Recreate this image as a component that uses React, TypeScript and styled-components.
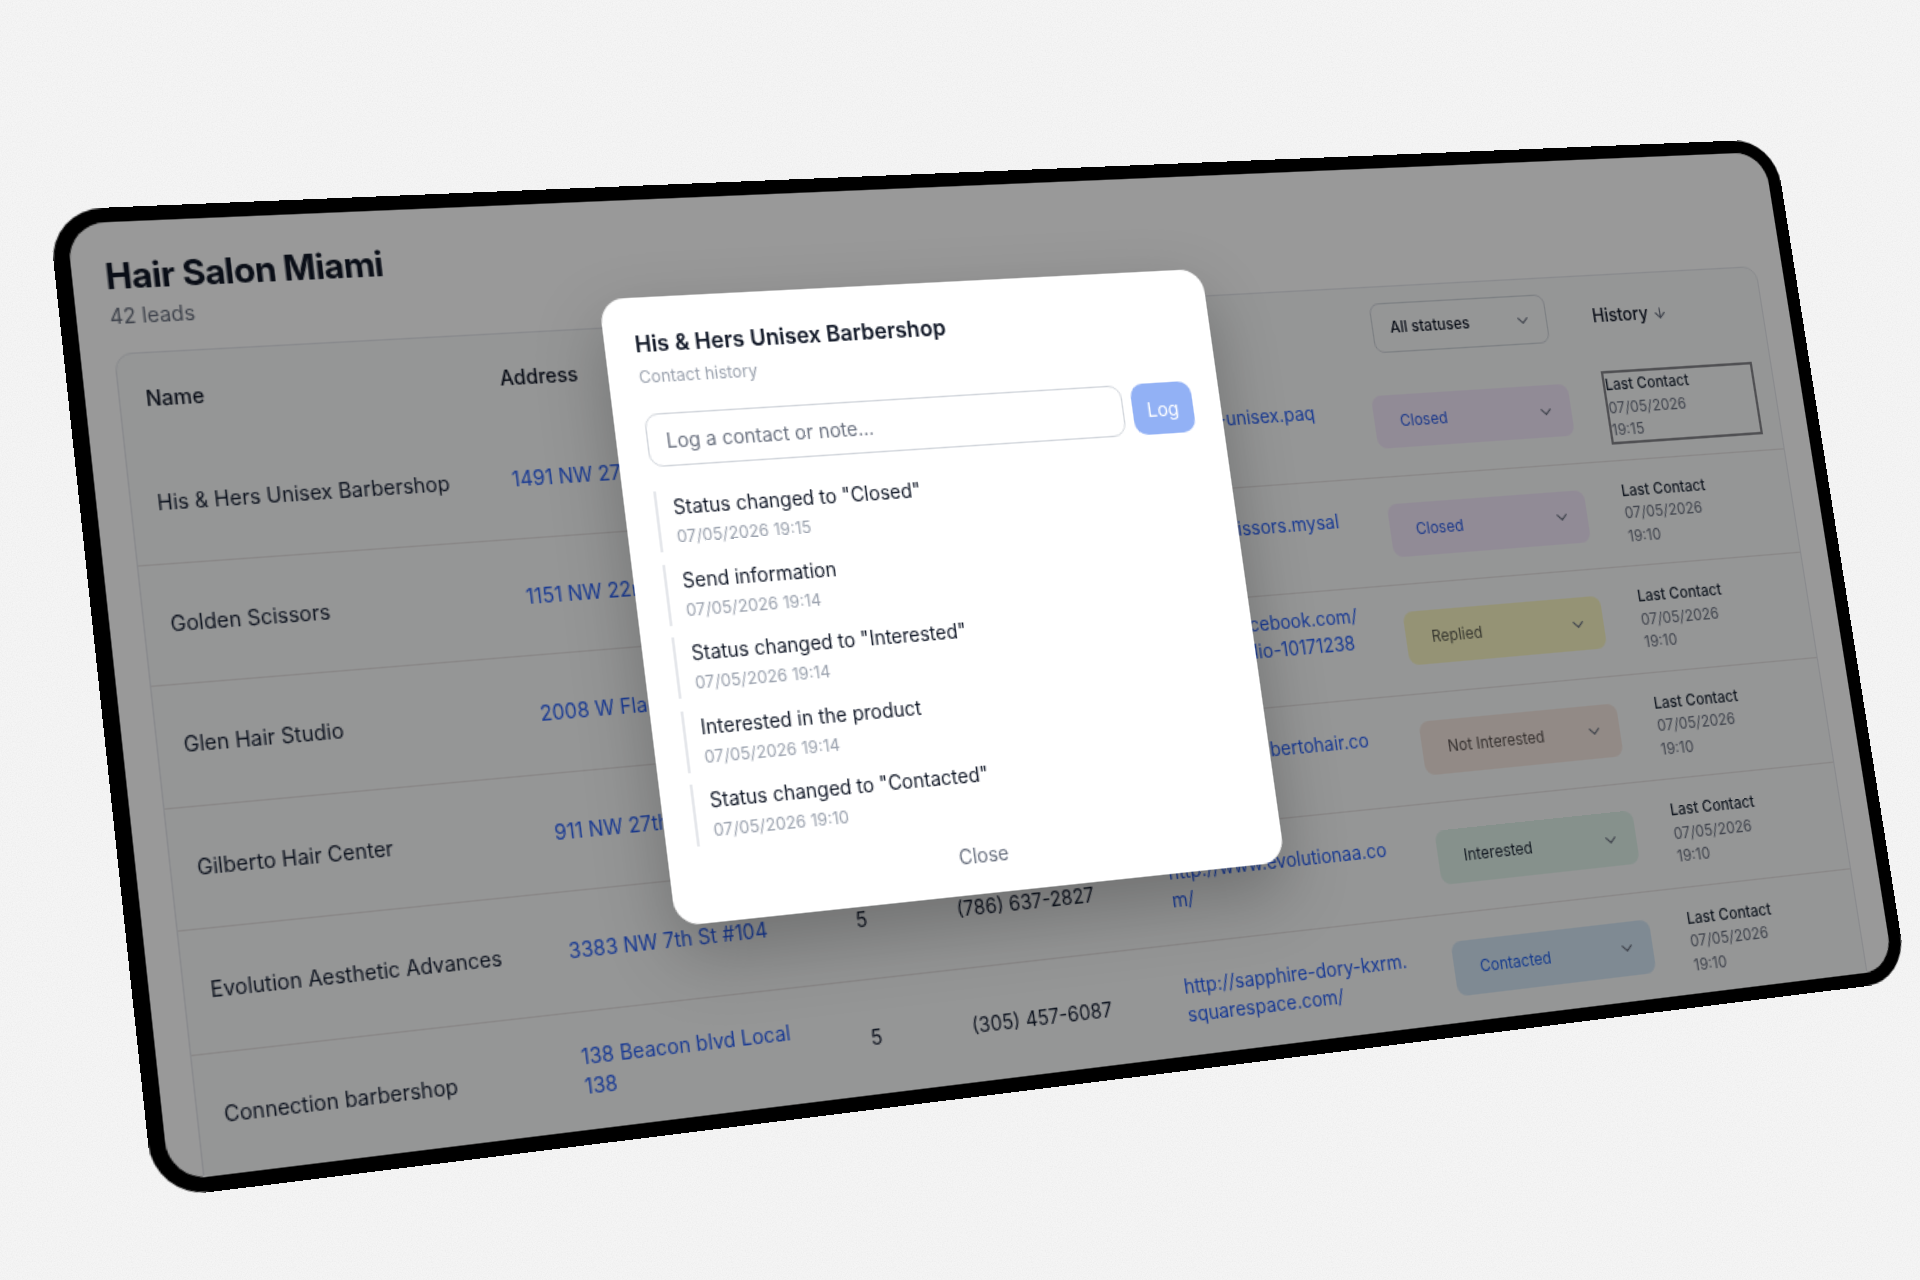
import React from 'react';
import styled, { createGlobalStyle } from 'styled-components';
import { ArrowDown, ChevronDown } from 'lucide-react';

const FRAME_W = 1330;
const FRAME_H = 660;

// maps the flat frame onto the four corners seen on the page
const quadMatrix = (w: number, h: number, q: number[][]) => {
  const [[x0, y0], [x1, y1], [x2, y2], [x3, y3]] = q;
  const dx1 = x1 - x2;
  const dx2 = x3 - x2;
  const sx = x0 - x1 + x2 - x3;
  const dy1 = y1 - y2;
  const dy2 = y3 - y2;
  const sy = y0 - y1 + y2 - y3;
  const den = dx1 * dy2 - dx2 * dy1;
  const g = (sx * dy2 - dx2 * sy) / den;
  const k = (dx1 * sy - sx * dy1) / den;
  const a = x1 - x0 + g * x1;
  const b = x3 - x0 + k * x3;
  const d = y1 - y0 + g * y1;
  const e = y3 - y0 + k * y3;
  return `matrix3d(${a / w},${d / w},0,${g / w},${b / h},${e / h},0,${k / h},0,0,1,0,${x0},${y0},0,1)`;
};

const frameMatrix = quadMatrix(FRAME_W, FRAME_H, [
  [48, 210],
  [1774, 139],
  [1908, 981],
  [154, 1199],
]);

const noise = `url("data:image/svg+xml,%3Csvg xmlns='http://www.w3.org/2000/svg' width='300' height='300'%3E%3Cfilter id='n'%3E%3CfeTurbulence type='fractalNoise' baseFrequency='.8' numOctaves='2' stitchTiles='stitch'/%3E%3CfeColorMatrix values='0 0 0 0 .6 0 0 0 0 .6 0 0 0 0 .6 0 0 0 .3 -.09'/%3E%3C/filter%3E%3Crect width='300' height='300' filter='url(%23n)'/%3E%3C/svg%3E")`;

const GlobalStyle = createGlobalStyle`
  html, body {
    margin: 0;
    padding: 0;
    background: #f5f5f5;
  }
  * {
    box-sizing: border-box;
  }
`;

const Stage = styled.div`
  position: relative;
  width: 1920px;
  height: 1280px;
  overflow: hidden;
  background-color: #f5f5f5;
  background-image: ${noise};
  font-family: Inter, "Liberation Sans", sans-serif;
`;

const Frame = styled.div`
  position: absolute;
  left: 0;
  top: 0;
  width: ${FRAME_W}px;
  height: ${FRAME_H}px;
  padding: 10px 11px;
  background: #000;
  border-radius: 36px;
  transform-origin: 0 0;
  transform: ${frameMatrix};
`;

const Screen = styled.div`
  position: relative;
  width: 100%;
  height: 100%;
  padding: 22px 23px 0 22px;
  overflow: hidden;
  background: #fff;
  border-radius: 26px;
`;

const Title = styled.h1`
  margin: 0;
  font-size: 24px;
  line-height: 32px;
  font-weight: 700;
  letter-spacing: -0.02em;
  color: #111827;
`;

const LeadCount = styled.p`
  margin: 1px 0 0;
  font-size: 14px;
  line-height: 20px;
  color: #6b7280;
`;

const TableCard = styled.div`
  margin-top: 15px;
  height: 700px;
  background: #f9fafb;
  border: 1px solid #e5e7eb;
  border-radius: 12px;
`;

const Row = styled.div<{ $head?: boolean }>`
  display: grid;
  grid-template-columns: 243px 206px 75px 163px 214px 197px 1fr;
  align-items: center;
  height: ${props => (props.$head ? 62 : 81.5)}px;
  padding: 0 17px;
  border-bottom: ${props => (props.$head ? 'none' : '1px solid #e5e1e1')};
  font-size: 14px;
  line-height: 20px;
  color: #172033;
`;

const HeadLabel = styled.div`
  font-weight: 500;
  color: #111827;
`;

const HistoryHead = styled(HeadLabel)`
  display: flex;
  align-items: center;
  gap: 4px;
  margin-left: -2px;
  color: #111827;

  svg {
    color: #6b7280;
  }
`;

const LinkText = styled.a`
  color: #2b62f5;
  text-decoration: none;
`;

const FilterSelect = styled.div`
  display: flex;
  align-items: center;
  justify-content: space-between;
  width: 147px;
  height: 38px;
  margin-left: 9px;
  padding: 0 12px 0 14px;
  border: 1px solid #d1d5db;
  border-radius: 8px;
  font-size: 12px;
  font-weight: 500;
  color: #111827;

  svg {
    color: #6b7280;
  }
`;

const statusColors: Record<string, { bg: string; fg: string }> = {
  Closed: { bg: '#f2e8fb', fg: '#2f5fe6' },
  Replied: { bg: '#f8f6c4', fg: '#5f5f50' },
  'Not Interested': { bg: '#f3e6df', fg: '#5d5553' },
  Interested: { bg: '#e0f2ea', fg: '#1f2937' },
  Contacted: { bg: '#d4e6f5', fg: '#2563eb' },
};

const StatusSelect = styled.div<{ $status: string }>`
  display: flex;
  align-items: center;
  justify-content: space-between;
  width: 165px;
  height: 40px;
  padding: 0 14px 0 21px;
  border-radius: 8px;
  font-size: 12px;
  font-weight: 400;
  background: ${props => statusColors[props.$status].bg};
  color: ${props => statusColors[props.$status].fg};

  svg {
    color: #6b7280;
  }
`;

const LastContact = styled.div<{ $focused?: boolean }>`
  width: 128px;
  font-size: 12px;
  line-height: 17.5px;
  color: #6b7280;
  outline: ${props => (props.$focused ? '2px solid #85858b' : 'none')};
`;

const LastContactLabel = styled.div`
  font-weight: 500;
  color: #1f2937;
`;

const Overlay = styled.div`
  position: absolute;
  inset: 0;
  display: flex;
  justify-content: center;
  align-items: flex-start;
  padding: 70px 129px 0 0;
  background: rgba(0, 0, 0, 0.4);
`;

const Modal = styled.div`
  width: 459px;
  padding: 21px 22px 9px 22px;
  background: #fff;
  border-radius: 18px;
  box-shadow: 0 20px 50px rgba(0, 0, 0, 0.25);
`;

const ModalTitle = styled.h2`
  margin: 0;
  font-size: 16px;
  line-height: 24px;
  font-weight: 600;
  color: #111827;
`;

const ModalSub = styled.p`
  margin: 4px 0 18px;
  font-size: 12px;
  line-height: 16px;
  color: #9ca3af;
`;

const LogRow = styled.div`
  display: flex;
  gap: 7px;
`;

const NoteInput = styled.div`
  flex: 1;
  display: flex;
  align-items: center;
  height: 38px;
  padding: 0 13px;
  border: 1px solid #d1d5db;
  border-radius: 10px;
  font-size: 14px;
  color: #6b7280;
`;

const LogButton = styled.button`
  width: 48px;
  height: 38px;
  padding: 0;
  border: none;
  border-radius: 10px;
  background: #92b1f5;
  color: #fff;
  font-family: inherit;
  font-size: 14px;
`;

const HistoryList = styled.div`
  display: flex;
  flex-direction: column;
  gap: 8.5px;
  margin-top: 17px;
`;

const HistoryItem = styled.div`
  padding: 2px 0 2px 11px;
  border-left: 2px solid #e5e7eb;
`;

const HistoryText = styled.div`
  font-size: 14px;
  line-height: 20px;
  color: #111827;
`;

const HistoryDate = styled.div`
  margin-top: 3px;
  font-size: 12px;
  line-height: 16px;
  color: #9ca3af;
`;

const CloseButton = styled.div`
  margin-top: 8px;
  padding: 8px 0;
  text-align: center;
  font-size: 14px;
  line-height: 20px;
  color: #6b7280;
`;

interface Lead {
  name: string;
  address: React.ReactNode;
  rating?: string;
  phone?: string;
  website: React.ReactNode;
  status: string;
  time: string;
}

const leads: Lead[] = [
  { name: 'His & Hers Unisex Barbershop', address: '1491 NW 27th Ave', website: <>http://hishers-unisex.paq<br />e/</>, status: 'Closed', time: '19:15' },
  { name: 'Golden Scissors', address: '1151 NW 22nd St', website: <>https://goldscissors.mysal<br />on/</>, status: 'Closed', time: '19:10' },
  { name: 'Glen Hair Studio', address: '2008 W Flagler St', website: <>http://www.facebook.com/<br />glen-hair-studio-10171238<br />/</>, status: 'Replied', time: '19:10' },
  { name: 'Gilberto Hair Center', address: '911 NW 27th Ave', website: <>http://www.gilbertohair.co<br />m/</>, status: 'Not Interested', time: '19:10' },
  { name: 'Evolution Aesthetic Advances', address: '3383 NW 7th St #104', rating: '5', phone: '(786) 637-2827', website: <>http://www.evolutionaa.co<br />m/</>, status: 'Interested', time: '19:10' },
  { name: 'Connection barbershop', address: <>138 Beacon blvd Local<br />138</>, rating: '5', phone: '(305) 457-6087', website: <>http://sapphire-dory-kxrm.<br />squarespace.com/</>, status: 'Contacted', time: '19:10' },
];

const history = [
  { text: 'Status changed to "Closed"', date: '07/05/2026 19:15' },
  { text: 'Send information', date: '07/05/2026 19:14' },
  { text: 'Status changed to "Interested"', date: '07/05/2026 19:14' },
  { text: 'Interested in the product', date: '07/05/2026 19:14' },
  { text: 'Status changed to "Contacted"', date: '07/05/2026 19:10' },
];

const App: React.FC = () => {
  return (
    <Stage>
      <GlobalStyle />
      <Frame>
        <Screen>
          <Title>Hair Salon Miami</Title>
          <LeadCount>42 leads</LeadCount>
          <TableCard>
            <Row $head>
              <HeadLabel>Name</HeadLabel>
              <HeadLabel>Address</HeadLabel>
              <HeadLabel>Rating</HeadLabel>
              <HeadLabel>Phone</HeadLabel>
              <HeadLabel>Website</HeadLabel>
              <FilterSelect>
                All statuses
                <ChevronDown size={15} />
              </FilterSelect>
              <HistoryHead>
                History
                <ArrowDown size={13} />
              </HistoryHead>
            </Row>
            {leads.map((lead, index) => (
              <Row key={index}>
                <div>{lead.name}</div>
                <LinkText>{lead.address}</LinkText>
                <div>{lead.rating}</div>
                <div>{lead.phone}</div>
                <LinkText>{lead.website}</LinkText>
                <StatusSelect $status={lead.status}>
                  {lead.status}
                  <ChevronDown size={15} />
                </StatusSelect>
                <LastContact $focused={index === 0}>
                  <LastContactLabel>Last Contact</LastContactLabel>
                  07/05/2026
                  <br />
                  {lead.time}
                </LastContact>
              </Row>
            ))}
          </TableCard>
          <Overlay>
            <Modal>
              <ModalTitle>His &amp; Hers Unisex Barbershop</ModalTitle>
              <ModalSub>Contact history</ModalSub>
              <LogRow>
                <NoteInput>Log a contact or note...</NoteInput>
                <LogButton>Log</LogButton>
              </LogRow>
              <HistoryList>
                {history.map((item, index) => (
                  <HistoryItem key={index}>
                    <HistoryText>{item.text}</HistoryText>
                    <HistoryDate>{item.date}</HistoryDate>
                  </HistoryItem>
                ))}
              </HistoryList>
              <CloseButton>Close</CloseButton>
            </Modal>
          </Overlay>
        </Screen>
      </Frame>
    </Stage>
  );
};

export default App;
